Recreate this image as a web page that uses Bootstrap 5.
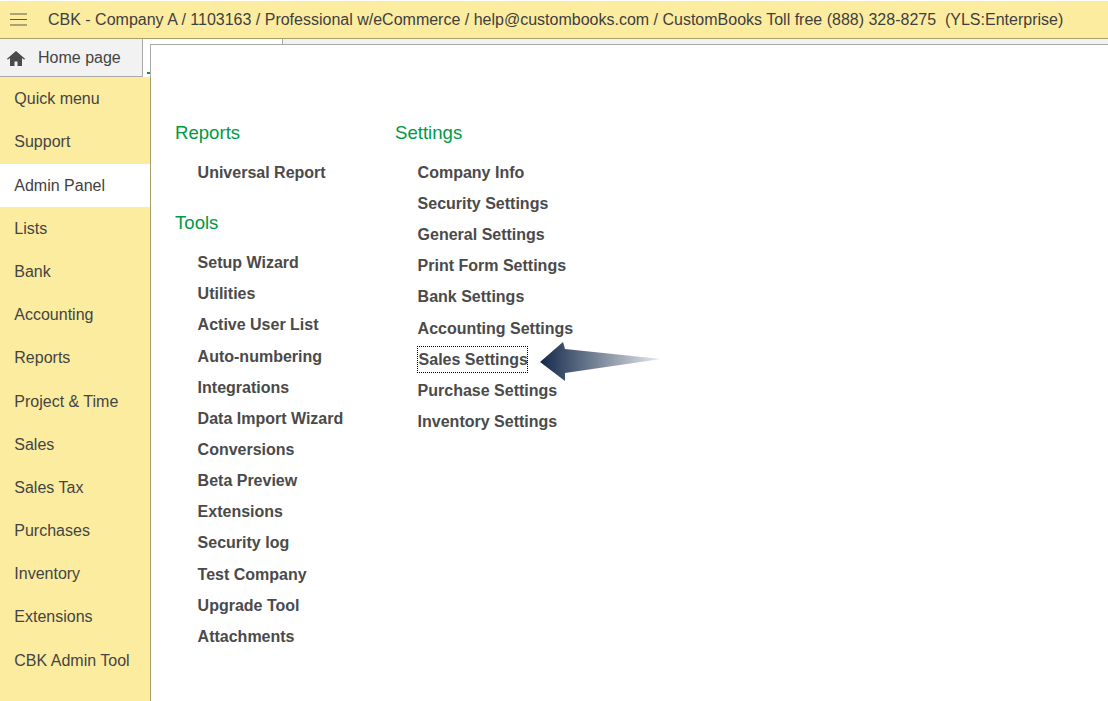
<!DOCTYPE html>
<html lang="en"><head><meta charset="utf-8"><title>CBK</title>
<link rel="stylesheet" href="https://cdn.jsdelivr.net/npm/bootstrap@5.3.0/dist/css/bootstrap.min.css">
<style>
html,body{height:701px;overflow:hidden;background:#fff}
body{font-family:"Liberation Sans",Arial,sans-serif;color:#444;font-size:16px;padding-top:1px}
.topbar{height:38px;background:#fbeca0;border-bottom:1px solid #a89f68;color:#3f3f3f;padding-left:10px;white-space:pre}
.burger{width:17px;margin-right:21px;flex:none}
.leftcol{width:150px;position:relative}
.homerow{width:143px;height:38px;background:#f2f2f2;border-right:1px solid #aaa;border-bottom:1px solid #aaa;padding:1px 0 0 7px;gap:13px}
.tick{position:absolute;left:147px;top:33px;width:3px;height:2px;background:#009a44}
.side{width:151px;height:624px;background:#fbeca0;border-right:1px solid #a89f68;position:relative;z-index:2;padding-top:.2px}
.sitem{height:43.2px;line-height:43.2px;padding-left:14.3px;color:#444}
.sitem.on{background:#fff;color:#3f3f3f}
.strip{height:5px}
.stripblank{width:133px;border-right:1px solid #aaa}
.stripfill{background:#f2f2f2}
.stage{border-top:1px solid #aaa;border-left:1px solid #aaa;padding:76px 0 0 24px;background:#fff;position:relative;height:657px}
.colA{width:220px}
.head{color:#009a44;font-size:18.6px;line-height:24px;margin:0 0 18px 0;font-weight:400}
.head.next{margin-top:29px;margin-bottom:18.15px}
.head.right{margin-bottom:17.8px}
.lnk{display:block;font-weight:700;color:#4a4a4a;line-height:19px;height:19px;margin:0 0 12.15px 22.6px;text-decoration:none;white-space:nowrap}
.focus{outline:1px dotted #000;width:109px;padding-left:1px;height:25px;line-height:25px;margin-top:-3px;margin-bottom:9.15px}
.arrow{position:absolute;left:389px;top:297px}
</style></head><body>
<div class="topbar d-flex align-items-center"><svg class="burger" viewBox="0 0 17 13" height="13"><path d="M0 1h17M0 6.500h17M0 12h17" stroke="#5a5a4c" stroke-width="1.200"/></svg><span>CBK - Company A / 1103163 / Professional w/eCommerce / help@custombooks.com / CustomBooks Toll free (888) 328-8275  (YLS:Enterprise)</span></div>
<div class="d-flex">
<div class="leftcol flex-shrink-0">
<div class="homerow d-flex align-items-center"><svg width="18" height="15" viewBox="0 0 18 15"><path d="M9 0 0 7.800l.8.900L3 7V15h4.500v-4.500h3V15H15V7l2.200 1.700.8-.9z" fill="#4a4a4a"/></svg><span>Home page</span></div>
<div class="tick"></div>
<nav class="side">
<div class="sitem">Quick menu</div><div class="sitem">Support</div><div class="sitem on">Admin Panel</div><div class="sitem">Lists</div><div class="sitem">Bank</div><div class="sitem">Accounting</div><div class="sitem">Reports</div><div class="sitem">Project &amp; Time</div><div class="sitem">Sales</div><div class="sitem">Sales Tax</div><div class="sitem">Purchases</div><div class="sitem">Inventory</div><div class="sitem">Extensions</div><div class="sitem">CBK Admin Tool</div>
</nav>
</div>
<div class="flex-grow-1">
<div class="strip d-flex"><div class="stripblank"></div><div class="stripfill flex-grow-1"></div></div>
<div class="stage d-flex">
<div class="colA">
<h2 class="head">Reports</h2>
<a class="lnk">Universal Report</a>
<h2 class="head next">Tools</h2>
<a class="lnk">Setup Wizard</a><a class="lnk">Utilities</a><a class="lnk">Active User List</a><a class="lnk">Auto-numbering</a><a class="lnk">Integrations</a><a class="lnk">Data Import Wizard</a><a class="lnk">Conversions</a><a class="lnk">Beta Preview</a><a class="lnk">Extensions</a><a class="lnk">Security log</a><a class="lnk">Test Company</a><a class="lnk">Upgrade Tool</a><a class="lnk">Attachments</a>
</div>
<div>
<h2 class="head right">Settings</h2>
<a class="lnk">Company Info</a><a class="lnk">Security Settings</a><a class="lnk">General Settings</a><a class="lnk">Print Form Settings</a><a class="lnk">Bank Settings</a><a class="lnk">Accounting Settings</a><a class="lnk focus">Sales Settings</a><a class="lnk">Purchase Settings</a><a class="lnk">Inventory Settings</a>
</div>
<svg class="arrow" width="122" height="40" viewBox="0 0 122 40"><defs><linearGradient id="ag"><stop offset="0" stop-color="#13294b"/><stop offset=".97" stop-color="#13294b" stop-opacity=".12"/><stop offset="1" stop-color="#13294b" stop-opacity=".05"/></linearGradient></defs><path d="M0 20 23 0l2 7 96 10-96 14v8z" fill="url(#ag)"/></svg>
</div>
</div>
</div>
</body></html>
